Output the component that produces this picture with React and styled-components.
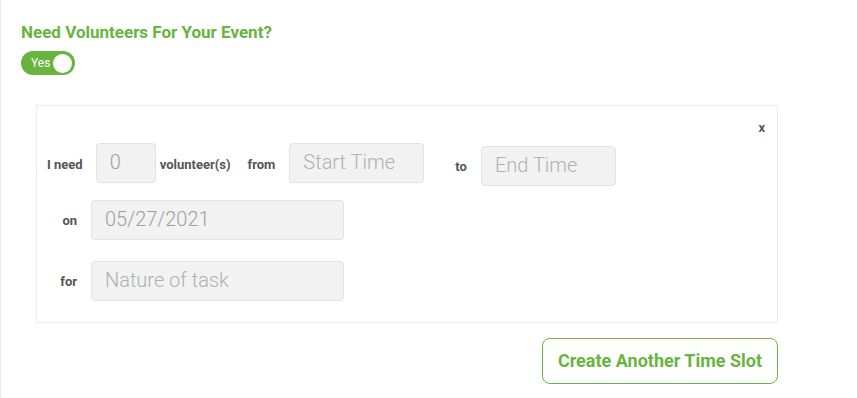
import React from "react";
import styled, { createGlobalStyle } from "styled-components";

const Global = createGlobalStyle`
  html, body { margin: 0; padding: 0; background: #fff; }
  body { font-family: Roboto, "Liberation Sans", Arial, sans-serif; }
  * { box-sizing: border-box; }
`;

const GREEN = "#68b43f";

const Page = styled.div`
  min-height: 398px;
  border-left: 1px solid #ececec;
  padding: 22px 0 0 20px;
`;

const Title = styled.h2`
  margin: 0;
  font-size: 17px;
  line-height: 20px;
  font-weight: 700;
  color: ${GREEN};
`;

const Toggle = styled.div`
  margin-top: 9px;
  width: 54px;
  height: 24px;
  border-radius: 12px;
  background: ${GREEN};
  display: flex;
  align-items: center;
  justify-content: space-between;
  padding: 0 3px 0 10px;
`;

const ToggleText = styled.span`
  color: #fff;
  font-size: 12px;
  line-height: 14px;
`;

const Knob = styled.span`
  width: 19px;
  height: 19px;
  border-radius: 50%;
  background: #fff;
`;

const Card = styled.div`
  margin: 30px 0 0 15px;
  width: 742px;
  border: 1px solid #ececec;
  padding: 14px 12px 21px 10px;
  display: flex;
  flex-direction: column;
`;

const CloseRow = styled.div`
  display: flex;
  justify-content: flex-end;
  height: 23px;
`;

const Close = styled.span`
  font-size: 13px;
  font-weight: 700;
  color: #555;
  line-height: 15px;
`;

const Row = styled.div`
  display: flex;
  align-items: ${(p) => (p.$top ? "flex-start" : "center")};
  margin-top: ${(p) => p.$mt || 0}px;
`;

const Label = styled.span`
  font-size: 13px;
  line-height: 15px;
  font-weight: 700;
  color: #555;
  white-space: nowrap;
  margin-left: ${(p) => p.$ml || 0}px;
  margin-right: ${(p) => p.$mr || 0}px;
  ${(p) => p.$w && `width: ${p.$w}px; text-align: right;`}
  ${(p) => p.$dy && `margin-top: ${p.$dy}px;`}
`;

const Field = styled.input`
  width: ${(p) => p.$w}px;
  height: 40px;
  margin-top: ${(p) => p.$dy || 0}px;
  background: #f2f2f2;
  border: 1px solid #e2e2e2;
  border-radius: 4px;
  padding: 0 0 2px 13px;
  font-family: "Roboto Light", Roboto, "Liberation Sans", Arial, sans-serif;
  font-weight: 300;
  font-size: 20px;
  color: #a0a0a0;
  outline: none;
  &::placeholder { color: #b0b0b0; }
`;

const Footer = styled.div`
  width: 757px;
  display: flex;
  justify-content: flex-end;
  margin-top: 15px;
`;

const Button = styled.button`
  width: 236px;
  height: 46px;
  border: 1px solid ${GREEN};
  border-radius: 8px;
  background: #fff;
  color: ${GREEN};
  font-family: Roboto, "Liberation Sans", Arial, sans-serif;
  font-weight: 700;
  font-size: 18px;
  padding: 0 0 1px;
`;

export default function App() {
  return (
    <>
      <Global />
      <Page>
        <Title>Need Volunteers For Your Event?</Title>
        <Toggle>
          <ToggleText>Yes</ToggleText>
          <Knob />
        </Toggle>
        <Card>
          <CloseRow>
            <Close>x</Close>
          </CloseRow>
          <Row $top>
            <Label $mr={13} $dy={14}>I need</Label>
            <Field $w={60} readOnly value="0" />
            <Label $ml={4} $mr={17} $dy={14}>volunteer(s)</Label>
            <Label $mr={14} $dy={14}>from</Label>
            <Field $w={135} readOnly placeholder="Start Time" />
            <Label $ml={31} $mr={14} $dy={16}>to</Label>
            <Field $w={135} $dy={3} readOnly placeholder="End Time" />
          </Row>
          <Row $mt={14}>
            <Label $w={30} $mr={14}>on</Label>
            <Field $w={253} readOnly value="05/27/2021" />
          </Row>
          <Row $mt={21}>
            <Label $w={30} $mr={14}>for</Label>
            <Field $w={253} readOnly placeholder="Nature of task" />
          </Row>
        </Card>
        <Footer>
          <Button>Create Another Time Slot</Button>
        </Footer>
      </Page>
    </>
  );
}
